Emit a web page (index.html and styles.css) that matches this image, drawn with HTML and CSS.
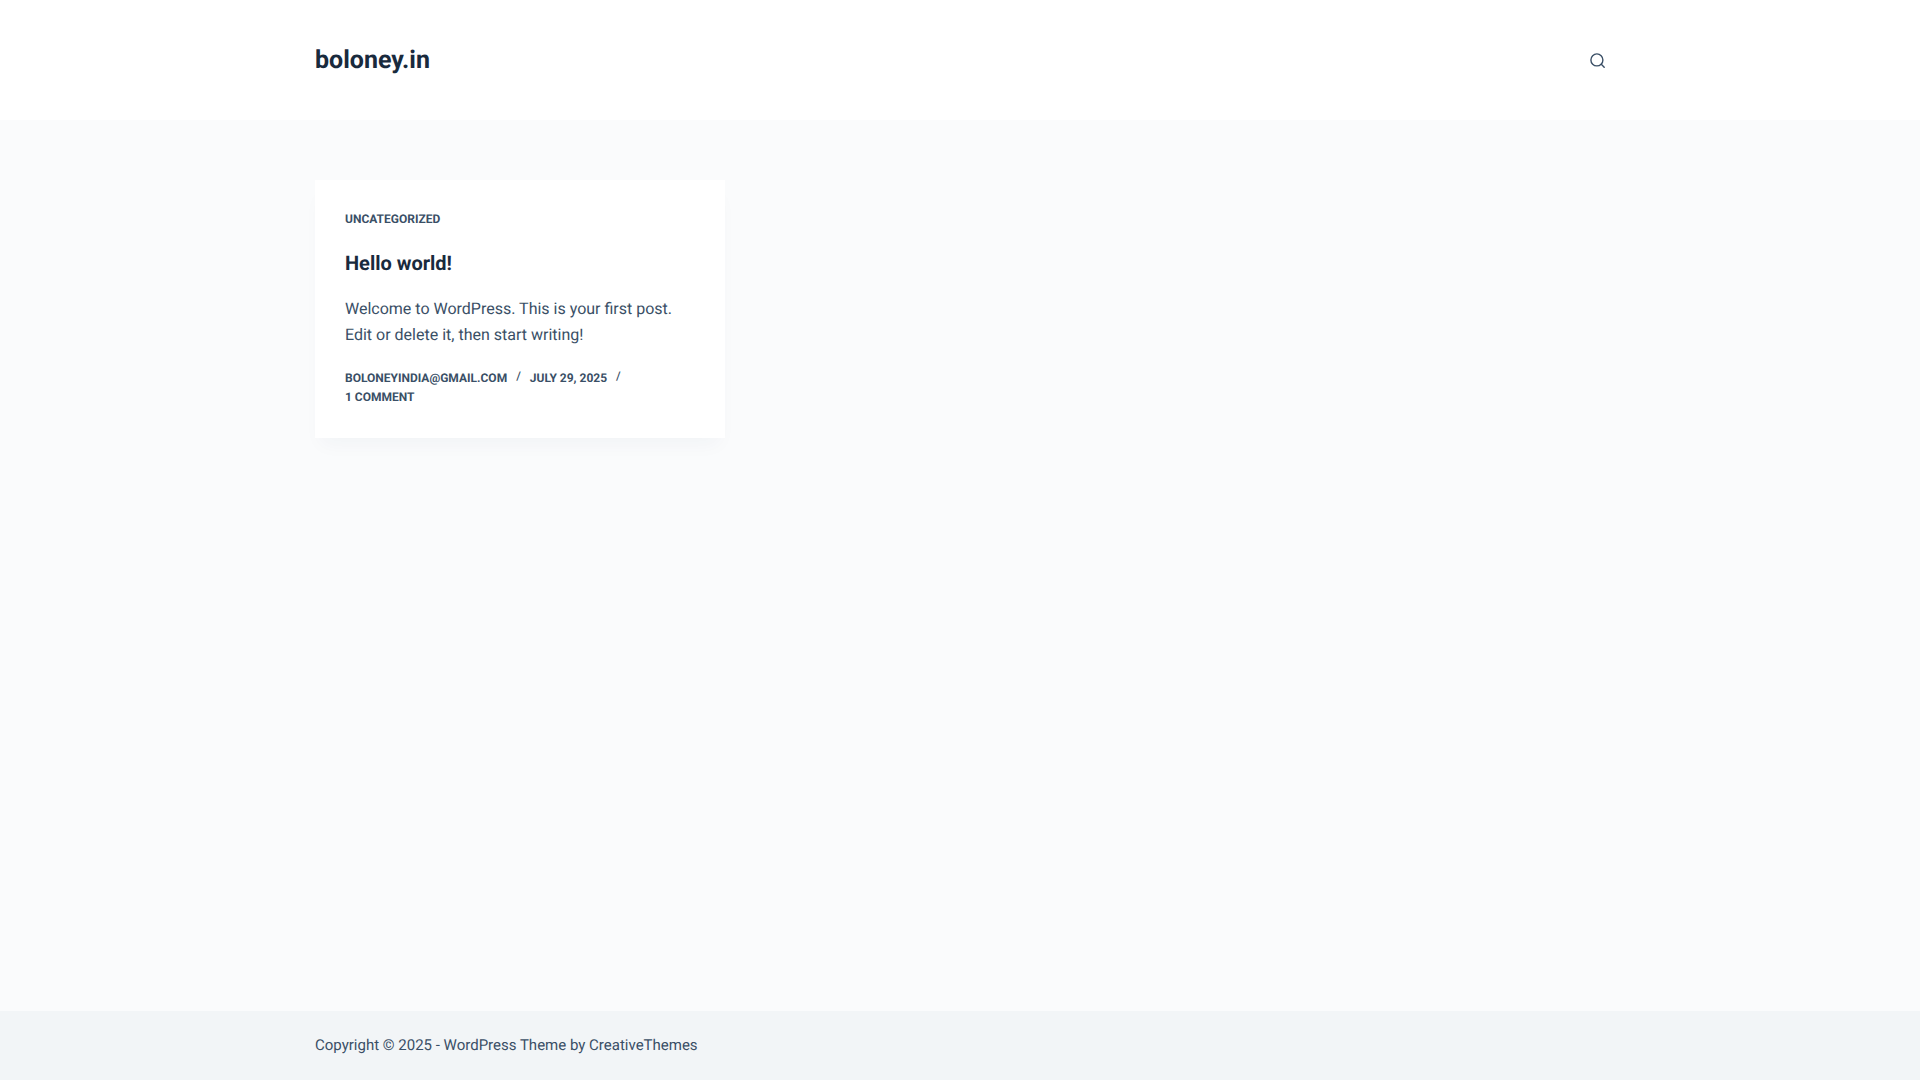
FILE: index.html
```html
<!DOCTYPE html>
<html lang="en">
<head>
<meta charset="utf-8">
<title>boloney.in</title>
<link rel="stylesheet" href="styles.css">
</head>
<body>
<div class="site">
  <header class="header">
    <div class="container header-row">
      <a class="brand" href="#">boloney.in</a>
      <a class="search" href="#" aria-label="Search">
        <svg width="15" height="15" viewBox="0 0 15 15" fill="none" stroke="currentColor" stroke-width="1.4" stroke-linecap="round"><circle cx="6.9" cy="6.9" r="6"/><path d="M11.3 11.3 14.2 14.2"/></svg>
      </a>
    </div>
  </header>
  <main class="main">
    <div class="container grid">
      <article class="card">
        <div class="meta category"><a href="#">UNCATEGORIZED</a></div>
        <h2 class="title"><a href="#">Hello world!</a></h2>
        <p class="excerpt">Welcome to WordPress. This is your first post. Edit or delete it, then start writing!</p>
        <ul class="meta meta-list">
          <li><a href="#">BOLONEYINDIA@GMAIL.COM</a></li>
          <li>JULY 29, 2025</li>
          <li><a href="#">1 COMMENT</a></li>
        </ul>
      </article>
    </div>
  </main>
  <footer class="footer">
    <div class="container">Copyright © 2025 - WordPress Theme by <a href="#">CreativeThemes</a></div>
  </footer>
</div>
</body>
</html>
```
FILE: styles.css
```css
* { box-sizing: border-box; }
html, body { margin: 0; padding: 0; }
body {
  font-family: Roboto, "Liberation Sans", sans-serif;
  font-size: 16px;
  line-height: 1.65;
  color: #3a4f66;
  background: #fafbfc;
  text-rendering: geometricPrecision;
}
a { color: inherit; text-decoration: none; }
.site { min-height: 100vh; display: flex; flex-direction: column; }
.container { width: 1290px; margin: 0 auto; }
.header { background: #fff; height: 120px; }
.header-row { height: 100%; display: flex; align-items: center; justify-content: space-between; }
.brand { font-size: 25px; font-weight: 700; line-height: 1.5; color: #192a3d; padding-top: 1px; }
.search { display: flex; color: #3a4f66; }
.main { flex: 1; padding-top: 60px; }
.grid { display: grid; grid-template-columns: 410px; }
.card {
  background: #fff;
  padding: 30px;
  height: 258px;
  box-shadow: 0 12px 18px -6px rgba(34, 56, 101, .04);
}
.meta { font-size: 12px; font-weight: 700; line-height: 1.6; }
.category { margin-bottom: 19px; margin-top: -0.5px; }
.title { margin: 0 0 18px; font-size: 20px; font-weight: 700; line-height: 1.5; color: #192a3d; }
.excerpt { margin: 0 0 21px; }
.meta-list { list-style: none; margin: 0; padding: 0; display: flex; flex-wrap: wrap; line-height: 19px; }
.meta-list li { display: flex; align-items: center; }
.meta-list li:not(:last-child)::after {
  content: "/";
  font-weight: 500;
  margin: -5px 9px 0 9px;
}
.footer { background: #f2f5f7; height: 69px; display: flex; align-items: center; font-size: 15px; }
```
